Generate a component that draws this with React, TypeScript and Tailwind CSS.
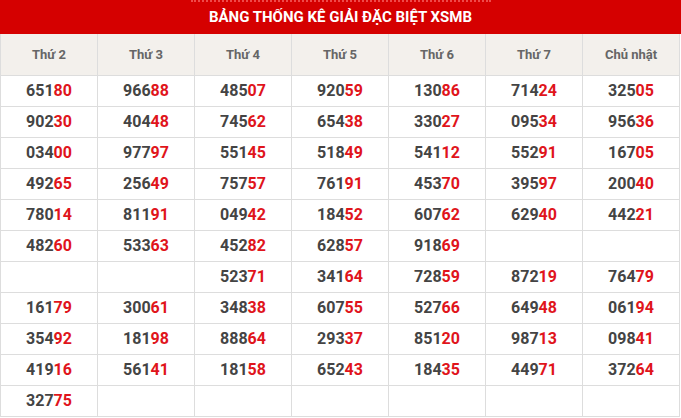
import React from 'react';

const days = ['Thứ 2', 'Thứ 3', 'Thứ 4', 'Thứ 5', 'Thứ 6', 'Thứ 7', 'Chủ nhật'];

const rows: string[][] = [
  ['65180', '96688', '48507', '92059', '13086', '71424', '32505'],
  ['90230', '40448', '74562', '65438', '33027', '09534', '95636'],
  ['03400', '97797', '55145', '51849', '54112', '55291', '16705'],
  ['49265', '25649', '75757', '76191', '45370', '39597', '20040'],
  ['78014', '81191', '04942', '18452', '60762', '62940', '44221'],
  ['48260', '53363', '45282', '62857', '91869', '', ''],
  ['', '', '52371', '34164', '72859', '87219', '76479'],
  ['16179', '30061', '34838', '60755', '52766', '64948', '06194'],
  ['35492', '18198', '88864', '29337', '85120', '98713', '09841'],
  ['41916', '56141', '18158', '65243', '18435', '44971', '37264'],
  ['32775', '', '', '', '', '', ''],
];

const Num: React.FC<{ value: string }> = ({ value }) => {
  if (!value) return null;
  return (
    <span>
      {value.slice(0, 3)}
      <span className="text-[#e0141b]">{value.slice(3)}</span>
    </span>
  );
};

const App: React.FC = () => {
  return (
    <div className="w-[681px] h-[418px] bg-white overflow-hidden" style={{ fontFamily: 'Roboto, "Liberation Sans", sans-serif' }}>
      {/* Title */}
      <div className="h-[34px] bg-[#d50000] flex flex-col items-center">
        <div className="w-[300px] h-[2px] border-t-2 border-dotted border-[#ef4a4a]" />
        <div className="flex-1 flex items-center text-white font-bold text-[15px] uppercase -mt-[2px]">
          Bảng thống kê giải đặc biệt XSMB
        </div>
      </div>

      {/* Table */}
      <table className="w-[680px] table-fixed border-collapse">
        <thead>
          <tr className="h-[41px] bg-[#f3f0ec]">
            {days.map((d) => (
              <th key={d} className="border border-[#dddddd] border-t-0 text-[13px] font-bold text-[#666666] text-center">
                {d}
              </th>
            ))}
          </tr>
        </thead>
        <tbody>
          {rows.map((row, i) => (
            <tr key={i} className="h-[31px]">
              {row.map((v, j) => (
                <td key={j} className="border border-[#dddddd] text-center text-[16px] font-bold text-[#444444] p-0">
                  <Num value={v} />
                </td>
              ))}
            </tr>
          ))}
        </tbody>
      </table>
    </div>
  );
};

export default App;
